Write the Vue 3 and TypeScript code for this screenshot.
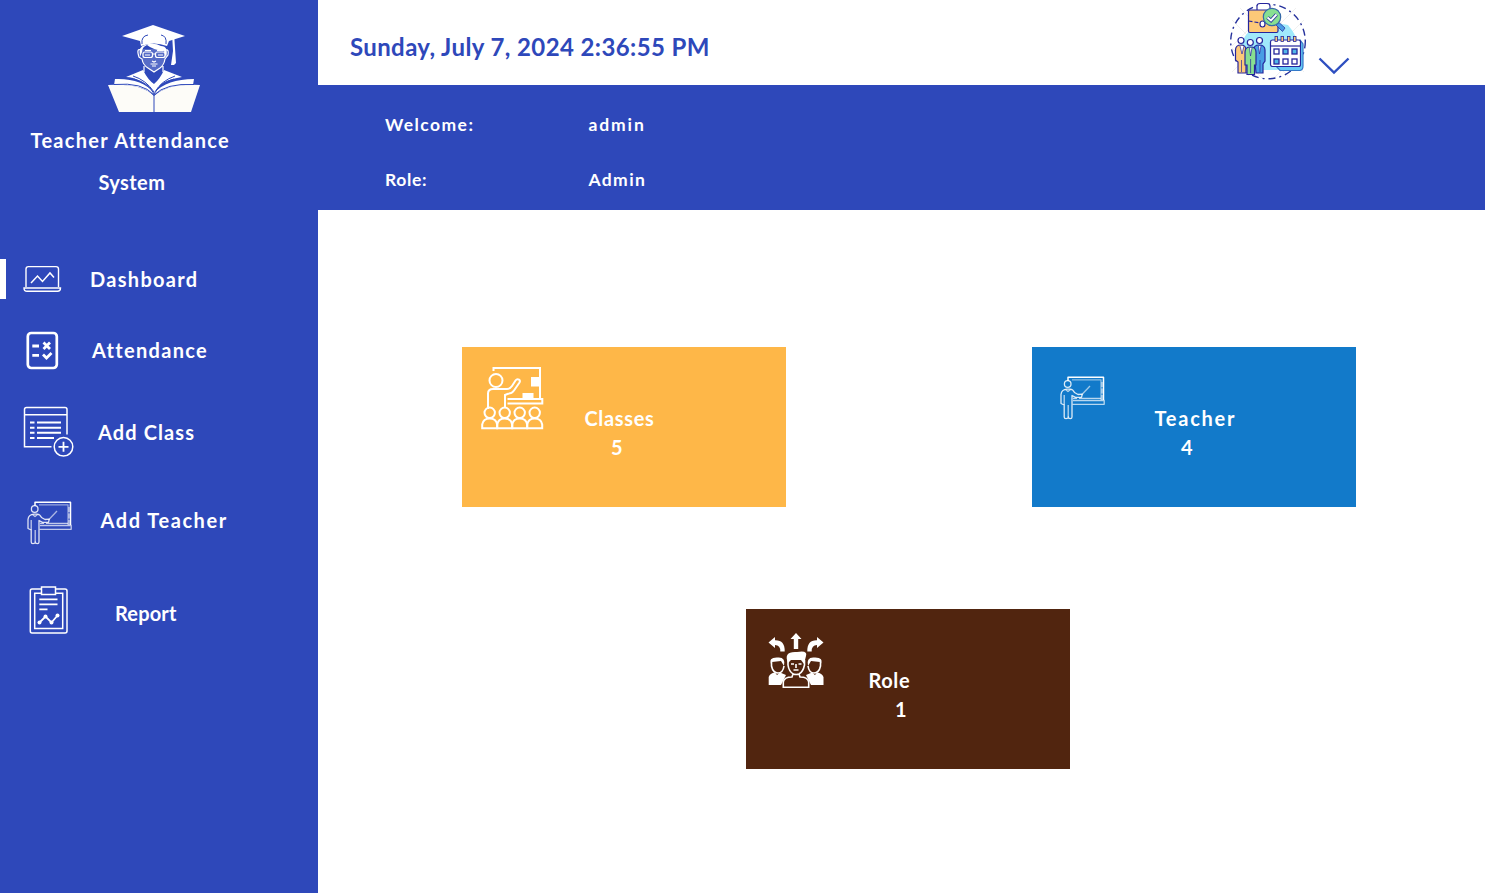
<script setup lang="ts">
interface Card {
  key: string
  label: string
  count: number
}

const cards: Card[] = [
  { key: 'classes', label: 'Classes', count: 5 },
  { key: 'teacher', label: 'Teacher', count: 4 },
  { key: 'role', label: 'Role', count: 1 },
]
const now = 'Sunday, July 7, 2024 2:36:55 PM'
const user = { name: 'admin', role: 'Admin' }
</script>

<template>
  <div class="app">
    <aside class="sidebar">
      <svg class="brand-logo" viewBox="0 0 120 105" width="120" height="105">
        <path class="solid" d="M27 21 L58 10 L90 21 L74 26 L72 31 Q59 26 46 31 L45 26 Z" />
        <path class="cut" d="M47 29 Q46 21 53 20 M71 29 Q72 21 66 20" />
        <path class="solid" d="M77 18 L79 18 L81 48 L79 50 L76 50 L78 36 Z" />
        <path class="solid" d="M45 42 Q43 31 50 30 Q59 27 66 31 Q74 31 71 43 L69 36 Q58 35 52 30 Q47 32 47 37 Z" />
        <path class="face" d="M46 34 H71 L70 44 Q68 52 59 57 Q49 52 47 44 Z" />
        <path class="line" d="M46 35 Q41 33 44 42 L47 44 Q48 50 53 53 L59 57 L65 53 Q69 50 70 44 L73 40 Q74 34 71 35 M49 51 V57 M68 51 V57" />
        <rect class="line" x="48" y="37" width="9.5" height="5.5" rx="2" />
        <rect class="line" x="60.500" y="37" width="9.500" height="5.500" rx="2" />
        <path class="line" d="M57 39 H61 M50 35.500 H56 M62 35.500 H68 M50 40 H55 M63 40 H68 M57 46 L59 47 L61 46 M55.500 49 H62.500 M57 51 H61" />
        <path class="solid" d="M31 62 L48 55 Q53 65 59 69 Q65 64 69 55 L87 62 Q74 64 66 69 L59 78 Q54 70 45 66 Q38 62 31 62 Z" />
        <path class="cut" d="M38 61 Q51 65 59 77 M80 61 Q66 66 60 77 M53 59 L58 65" />
        <path class="solid" d="M20 64 Q47 63 59 78 Q72 64 99 64 L98 70 Q72 70 59 80 Q47 69 19 70 Z" />
        <path class="cream" d="M13 70 Q47 68 59 81 Q73 68 105 70 L96 97 H24 Z" />
        <path class="cut" d="M19 69.500 Q48 67 59 80 V97 M59 80 Q71 68 99 69.500 M39 64 Q54 68 59 79 M79 64 Q66 67 59 79" />
      </svg>
      <h1 class="brand"><span class="b1">Teacher Attendance</span><span class="b2">System</span></h1>

      <nav class="nav">
        <a class="item dashboard active">
          <svg viewBox="22 259 40 40" width="40" height="40" class="thin-icon">
            <path d="M26 287 V269 Q26 266.600 28.400 266.600 H56 Q58.500 266.600 58.500 269 V287" />
            <path d="M24 288 H60.500 Q60.500 291.300 57.500 291.300 H27 Q24 291.300 24 288 Z" />
            <path class="w15" d="M31 283 L37.500 276 L42.500 281.500 L50 273 L54 277.500" />
          </svg>
          <span>Dashboard</span>
        </a>
        <a class="item attendance">
          <svg viewBox="22 330 40 40" width="40" height="40" class="icon">
            <rect x="27.800" y="333" width="29" height="35" rx="3.500" stroke-width="2.700" />
            <path stroke-width="2.800" d="M32.300 346 H39 M32.300 355.300 H39 M43.500 342.500 L50 349 M50 342.500 L43.500 349 M43 354.500 L46.500 358 L51.500 353" />
          </svg>
          <span>Attendance</span>
        </a>
        <a class="item add-class">
          <svg viewBox="22 404 53 55" width="53" height="55" class="icon w15">
            <path d="M51.500 446.800 H24.500 V409.500 Q24.500 407.600 26.500 407.600 H65 Q67 407.600 67 409.500 V434.500 M24.500 414.700 H67" />
            <path stroke-width="2" d="M30 422.600 H34.500 M37 422.600 H61 M30 427.700 H34.500 M37 427.700 H61 M30 432.800 H34.500 M37 432.800 H61 M30 437.900 H34.500 M37 437.900 H54" />
            <circle cx="63.500" cy="446.800" r="9.300" />
            <path stroke-width="1.800" d="M58.500 446.800 H68.500 M63.500 441.800 V451.800" />
          </svg>
          <span>Add Class</span>
        </a>
        <a class="item add-teacher">
          <svg viewBox="-5 -7 53 52" width="53" height="52"><use href="#teacher-board" /></svg>
          <span>Add Teacher</span>
        </a>
        <a class="item report">
          <svg viewBox="22 584 53 56" width="53" height="56" class="icon w15">
            <path d="M41 589 H32 Q30.300 589 30.300 591 V631 Q30.300 633 32 633 H65 Q67 633 67 631 V591 Q67 589 65 589 H56" />
            <path d="M41 593.200 H34.700 V628.500 H62.700 V593.200 H56" />
            <rect x="41.500" y="587" width="14" height="7.500" />
            <path stroke-width="1.800" d="M39.300 599.300 H57.500 M39.300 604.300 H57.500 M39.300 609.400 H47.500" />
            <path stroke-width="1.800" d="M39.500 622.500 L45.500 616.500 L51.500 622.500 L57.500 615.500" />
            <g fill="#fff" stroke="none">
              <circle cx="39.500" cy="622.500" r="2" /><circle cx="45.500" cy="616.500" r="2" />
              <circle cx="51.500" cy="622.500" r="2" /><circle cx="57.500" cy="615.500" r="2" />
            </g>
          </svg>
          <span>Report</span>
        </a>
      </nav>
    </aside>

    <main class="main">
      <header class="topbar">
        <time class="clock">{{ now }}</time>
        <svg class="avatar" viewBox="1226 0 84 84" width="84" height="84">
          <path class="lattice" d="M1232 20 L1288 76 M1232 48 L1262 78 M1240 8 L1304 72 M1262 4 L1304 46 M1304 20 L1248 76 M1304 48 L1274 78 M1296 8 L1232 72 M1274 4 L1232 46" />
          <path class="sky" d="M1238 64 Q1238 30 1266 21 L1288 25 Q1303 42 1298 61 L1277 70 H1243 Z" />
          <circle class="orbit" cx="1268" cy="41.500" r="37.300" />
          <g class="ink">
            <path fill="#fff" d="M1257 10 V6 Q1257 3.500 1260 3.500 H1267 Q1270 3.500 1270 6 V10" />
            <rect fill="#fdc978" x="1248.500" y="10" width="29.500" height="22.500" rx="1.500" />
            <path d="M1248.500 21 L1260 23 M1265 23 L1276 20" stroke-dasharray="4 2" />
            <ellipse fill="#fff" cx="1262.500" cy="24" rx="2.500" ry="3" />
            <path fill="#489de4" stroke-width=".7" d="M1276 25 L1279 22.500 L1285 28 L1282.500 31.500 Z" />
            <circle fill="#88df91" stroke="#3569a9" cx="1272" cy="17" r="8.700" />
            <path stroke="#25319c" stroke-width="3.600" d="M1267.500 17.500 L1271 20.500 L1276.500 14.500" />
            <path stroke="#fff" stroke-width="1.900" d="M1267.500 17.500 L1271 20.500 L1276.500 14.500" />
            <path fill="#fdc978" d="M1235.500 50 Q1235.500 45 1241 45 Q1246 45 1246 50 V73 H1238 V62 L1235.500 60 Z" />
            <path fill="#489de4" d="M1254 49 Q1254 45 1259 45 Q1265 45 1265 50 V61 L1263 64 V73 H1256 Z" />
            <path fill="#88df91" d="M1245 52 Q1245 47 1250.500 47 Q1256 47 1256 52 V65 H1254.500 V74.500 H1247 V65 H1245 Z" />
            <circle fill="#fff" cx="1241" cy="40.500" r="3" /><circle fill="#fff" cx="1259.500" cy="40.500" r="3" />
            <circle fill="#fff" cx="1250.300" cy="42.500" r="3" />
            <path fill="#fff" stroke-width=".7" d="M1240 46 L1242 54 L1244 46 M1249.500 48 L1250.500 56 L1252 48 M1258.500 46 L1259.500 54 L1261 46 M1241.500 60 V72 M1250.600 59 V73 M1260 60 V72" />
            <path fill="#65c9f5" stroke="#3479c8" d="M1276 66 L1280 70.500 H1300 Q1303 70 1303 66 V44 L1300 40 Z" />
            <rect fill="#fff" x="1270.500" y="40" width="30" height="26.500" rx="2" />
            <path d="M1271 46 H1300" />
            <g fill="#fdc978" stroke-width=".8"><rect x="1275" y="36.500" width="2.500" height="5" /><rect x="1281" y="36.500" width="2.500" height="5" /><rect x="1287.500" y="36.500" width="2.500" height="5" /><rect x="1293.500" y="36.500" width="2.500" height="5" /></g>
            <g stroke-width="1.300"><rect fill="#fff" x="1274" y="49" width="5" height="5" /><rect fill="#51b7e9" x="1283" y="49" width="5" height="5" /><rect fill="#51b7e9" x="1292" y="49" width="5" height="5" /><rect fill="#51b7e9" x="1274" y="59" width="5" height="5" /><rect fill="#fff" x="1283" y="59" width="5" height="5" /><rect fill="#fff" x="1292" y="59" width="5" height="5" /></g>
          </g>
        </svg>
        <svg class="chevron" viewBox="0 0 32 18" width="32" height="18"><path d="M1.500 1.500 L16 15.500 L30.500 1.500" /></svg>
      </header>

      <section class="welcome">
        <span class="w1">Welcome:</span><span class="w2">{{ user.name }}</span>
        <span class="w3">Role:</span><span class="w4">{{ user.role }}</span>
      </section>

      <section class="cards">
        <article v-for="c in cards" :key="c.key" class="card" :class="c.key">
          <svg v-if="c.key === 'classes'" class="card-icon icon" viewBox="462 347 100 100" width="100" height="100">
            <g stroke-width="2">
              <path d="M493.500 371 V368 H540 V399 M507.500 399 H542.300 V403.500 H507.500" />
              <path d="M488 409 V393.500 Q488 389 493 389 H507 Q510 389 512 386 L515.500 380.500 Q517 378.500 519 379.700 Q520.500 380.700 519.500 382.500 L514 390.500 Q512 393.500 508 393.800 L505 395 V408" />
              <circle cx="496" cy="380.500" r="6.500" />
              <g v-for="x in [489.700, 504.700, 519.700, 534.700]" :key="x">
                <circle :cx="x" cy="412.800" r="5.200" />
                <path :d="`M${x - 7.500} 428.300 V424.500 Q${x - 6.500} 418.500 ${x} 418.500 Q${x + 6.500} 418.500 ${x + 7.500} 424.500 V428.300 Z`" />
              </g>
            </g>
            <g fill="#fff" stroke="none"><rect x="531" y="377" width="9" height="9.500" /><rect x="522.500" y="393" width="11" height="6" /></g>
          </svg>
          <svg v-else-if="c.key === 'teacher'" class="card-icon" viewBox="-28 -29 100 100" width="100" height="100"><use href="#teacher-board" /></svg>
          <svg v-else class="card-icon icon" viewBox="746 609 100 100" width="100" height="100">
            <g fill="#fff" stroke="none">
              <path d="M796 633 L801.500 639 H798.200 V649 H793.800 V639 H790.500 Z" />
              <path d="M768.500 642.500 L775 637 V640.300 Q785 640 784.700 651.500 H780.300 Q780.500 645 775 645 V648 Z" />
              <path d="M823.500 642.500 L817 637 V640.300 Q807 640 807.300 651.500 H811.700 Q811.500 645 817 645 V648 Z" />
              <path d="M768.700 685 V677 Q770 673 775 672.500 L777 675 L780 672.500 L786 675 L781 685 Z" />
              <path d="M823.500 685 V677 Q822 673 817 672.500 L815 675 L812 672.500 L806 675 L811 685 Z" />
              <path d="M771 664 Q768 657 778 657.500 Q786 657 784 666 L781 661 L772 662 Z" />
              <path d="M821 664 Q824 657 814 657.500 Q806 657 808 666 L811 661 L820 662 Z" />
              <path d="M788 663 Q783 651 797 652 Q808 650 806 656 L804 664 L801 660 H791 Z" />
            </g>
            <g stroke-width="1.600">
              <path d="M771.500 662 V666 Q773 673 778 673 Q783 673 784 666 M820.500 662 V666 Q819 673 814 673 Q809 673 808 666" />
              <path d="M788 660 V665 Q789 672 793.500 674 Q796 675 799 674 Q803 672 804.500 665 V660 M793 674 L792 677 Q784 677 783.300 682 V687.300 H808.700 V682 Q808 677 800 677 L799 674" />
              <path d="M791 664 H794 M798.500 664 H801.500 M796 664 V668 M793.500 670 H798.500" />
            </g>
          </svg>
          <div class="stat"><span class="label">{{ c.label }}</span><span class="count">{{ c.count }}</span></div>
        </article>
      </section>
    </main>

    <svg class="defs" width="0" height="0">
      <defs>
        <g id="teacher-board" fill="none" stroke="#fff" stroke-opacity=".85" stroke-width="1.300" stroke-linejoin="round">
          <path stroke-width="1.500" stroke-opacity="1" d="M8 5 V1.300 H43.500 V24" />
          <path stroke-opacity=".5" d="M12 3.800 H41 V24" />
          <path stroke-opacity=".7" stroke-dasharray="5 1.500" d="M42 6 V24" />
          <path d="M13 24.500 H44.200 V28.300 H12.500 M13 22.300 H17 M19 22.300 H41" stroke-opacity=".7" />
          <circle cx="7.700" cy="8" r="3.300" />
          <path d="M7 13.200 H10 Q13 13.500 14.500 16.500 L18 18.500 L22.300 18.200 L21.500 21.300 H15.500 L12 19.500 V41 Q12 42.700 10.300 42.700 Q8.500 42.700 8.300 41 Q8 42.700 6 42.700 Q4.200 42.700 4.200 41 V29 L1 27.500 V18.500 Q1.500 13.500 7 13.200 Z" />
          <path stroke-opacity=".7" d="M4.200 19 V29 M8.200 29 V41 M5.500 13.500 L8 15.500 L10.500 13.500" />
          <path stroke-opacity=".6" d="M21.500 19 L30 10" />
        </g>
      </defs>
    </svg>
  </div>
</template>

<style>
html,
body {
  margin: 0;
  overflow: hidden;
}
</style>

<style scoped>
.app {
  display: flex;
  width: 1485px;
  height: 893px;
  background: #fff;
  color: #fff;
  font: 700 20px/28px 'Century Gothic', Lato, sans-serif;
  overflow: hidden;
  white-space: nowrap;
}
.sidebar {
  flex: 0 0 318.400px;
  box-sizing: border-box;
  padding-top: 15px;
  background: #2e48ba;
}
.brand-logo {
  display: block;
  margin-left: 95px;
}
.solid {
  fill: #fff;
}
.cream {
  fill: #fdfcf8;
}
.face {
  fill: #fff;
  fill-opacity: 0.200;
}
.line {
  fill: none;
  stroke: #fff;
  stroke-width: 1.200;
}
.cut {
  fill: none;
  stroke: #2e48ba;
  stroke-width: 1;
}
.brand {
  display: flex;
  flex-direction: column;
  gap: 13.500px;
  margin: 6px 0 0;
  font-size: 20px;
  font-weight: 700;
}
.b1 {
  margin-left: 30.500px;
  letter-spacing: 1.300px;
}
.b2 {
  margin-left: 98.500px;
  letter-spacing: 0.400px;
}
.nav {
  margin-top: 63.500px;
}
.item {
  display: flex;
  align-items: center;
  box-sizing: border-box;
  padding-left: 22px;
}
.item svg {
  flex: none;
}
.dashboard {
  height: 40px;
}
.active {
  border-left: 6px solid #fff;
  padding-left: 16px;
}
.attendance {
  height: 40px;
  margin-top: 31px;
}
.add-class {
  height: 55px;
  margin-top: 34px;
}
.add-teacher {
  height: 52px;
  margin-top: 35px;
}
.report {
  height: 56px;
  margin-top: 38px;
}
.dashboard span {
  margin-left: 28px;
  letter-spacing: 1.300px;
}
.attendance span {
  margin-left: 30px;
  letter-spacing: 1.300px;
}
.add-class span {
  margin-left: 23px;
  letter-spacing: 1.100px;
}
.add-teacher span {
  margin-left: 25.500px;
  letter-spacing: 1.550px;
}
.report span {
  margin: 2px 0 0 40px;
  letter-spacing: 0.150px;
}
.icon,
.thin-icon {
  fill: none;
  stroke: #fff;
}
.thin-icon {
  stroke-width: 1.400;
}
.w15 {
  stroke-width: 1.500;
}
.main {
  flex: 1;
  min-width: 0;
}
.topbar {
  display: flex;
  height: 85.300px;
}
.clock {
  width: 876px;
  margin: 33px 0 0 31.500px;
  color: #2e48ba;
  font-size: 24px;
  letter-spacing: 0.400px;
}
.avatar {
  flex: none;
}
.lattice {
  fill: none;
  stroke: #f0f0f0;
  stroke-width: 1;
}
.sky {
  fill: #a0e9fb;
}
.orbit {
  fill: none;
  stroke: #25319c;
  stroke-width: 1.400;
  stroke-dasharray: 7 4 2 4;
}
.ink {
  fill: none;
  stroke: #25259c;
  stroke-width: 1.200;
}
.chevron {
  flex: none;
  margin: 56.500px 0 0 8.500px;
  fill: none;
  stroke: #2e4fc0;
  stroke-width: 2.400;
}
.welcome {
  display: grid;
  grid-template-columns: 203.500px 1fr;
  grid-template-rows: 55px 55px;
  align-items: center;
  box-sizing: border-box;
  height: 125px;
  padding: 12px 0 0 66.500px;
  background: #2e48ba;
  font-size: 17.500px;
}
.w1 {
  letter-spacing: 1.450px;
}
.w2 {
  letter-spacing: 1.900px;
}
.w3 {
  letter-spacing: 0.700px;
}
.w4 {
  letter-spacing: 1.400px;
}
.cards {
  display: grid;
  grid-template-columns: 324px 324px;
  column-gap: 246px;
  row-gap: 102.500px;
  padding: 136.500px 0 0 143.600px;
}
.card {
  display: flex;
  width: 324px;
  height: 160px;
}
.card-icon {
  flex: none;
}
.classes {
  background: #feb748;
}
.teacher {
  background: #127aca;
}
.role {
  grid-column: 1 / -1;
  margin-left: 284px;
  background: #51250f;
}
.stat {
  display: flex;
  flex-direction: column;
  align-items: flex-start;
  padding: 57px 0 0 22.500px;
}
.classes .label {
  letter-spacing: 0.650px;
}
.teacher .label {
  letter-spacing: 1.750px;
}
.role .label {
  letter-spacing: 0.600px;
}
.count {
  margin-left: 26.500px;
  line-height: 30px;
}
.defs {
  display: none;
}
</style>
